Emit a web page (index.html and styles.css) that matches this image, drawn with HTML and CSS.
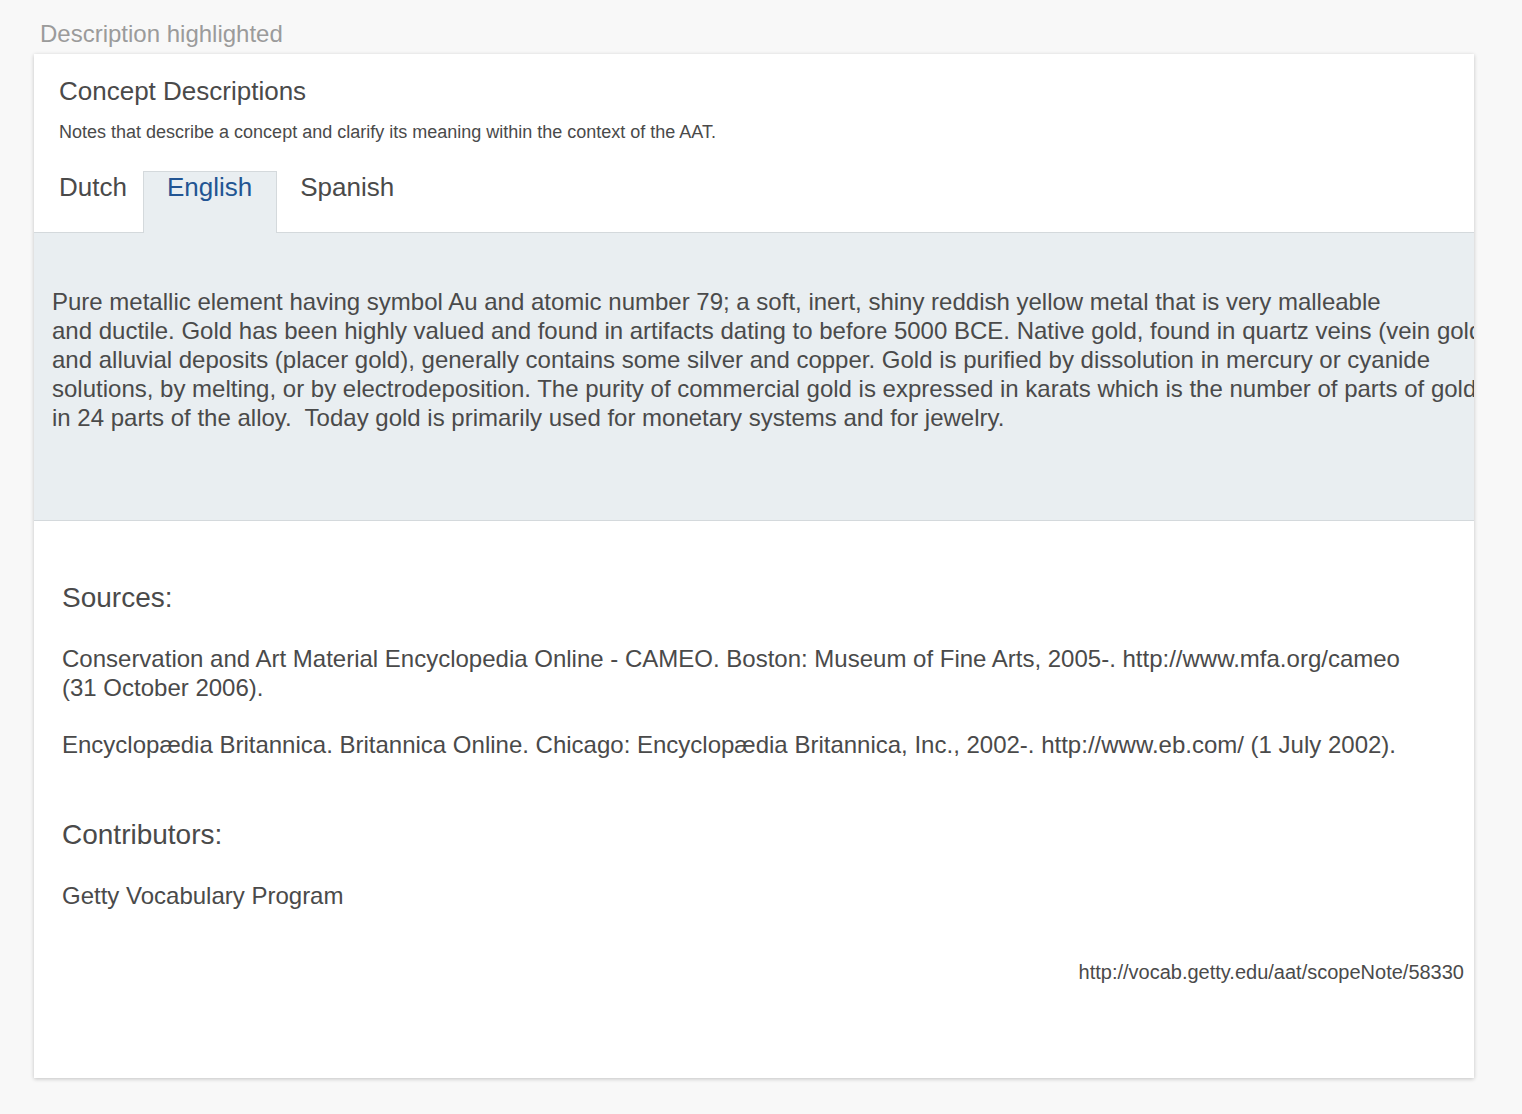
FILE: index.html
```html
<!DOCTYPE html>
<html lang="en">
<head>
<meta charset="utf-8">
<title>Description highlighted</title>
<link rel="stylesheet" href="styles.css">
</head>
<body>
<div class="page">
  <div class="label">Description highlighted</div>
  <section class="card">
    <header class="card-head">
      <h1 class="title">Concept Descriptions</h1>
      <p class="subtitle">Notes that describe a concept and clarify its meaning within the context of the AAT.</p>
    </header>
    <nav class="tabs">
      <span class="tab tab-dutch">Dutch</span>
      <span class="tab tab-english active">English</span>
      <span class="tab tab-spanish">Spanish</span>
    </nav>
    <div class="panel">
      <p class="note"><span class="line">Pure metallic element having symbol Au and atomic number 79; a soft, inert, shiny reddish yellow metal that is very malleable</span>
<span class="line">and ductile. Gold has been highly valued and found in artifacts dating to before 5000 BCE. Native gold, found in quartz veins (vein gold)</span>
<span class="line">and alluvial deposits (placer gold), generally contains some silver and copper. Gold is purified by dissolution in mercury or cyanide</span>
<span class="line">solutions, by melting, or by electrodeposition. The purity of commercial gold is expressed in karats which is the number of parts of gold</span>
<span class="line">in 24 parts of the alloy.&nbsp; Today gold is primarily used for monetary systems and for jewelry.</span></p>
    </div>
    <div class="meta">
      <h2 class="meta-title">Sources:</h2>
      <p class="meta-text">Conservation and Art Material Encyclopedia Online - CAMEO. Boston: Museum of Fine Arts, 2005-. http://www.mfa.org/cameo<br>(31 October 2006).</p>
      <p class="meta-text">Encyclopædia Britannica. Britannica Online. Chicago: Encyclopædia Britannica, Inc., 2002-. http://www.eb.com/ (1 July 2002).</p>
      <h2 class="meta-title contrib">Contributors:</h2>
      <p class="meta-text">Getty Vocabulary Program</p>
      <div class="uri">http://vocab.getty.edu/aat/scopeNote/58330</div>
    </div>
  </section>
</div>
</body>
</html>
```

FILE: styles.css
```css
html, body {
  margin: 0;
  padding: 0;
  background: #f8f8f8;
}
body {
  font-family: "Liberation Sans", Arial, Helvetica, sans-serif;
  color: #4a4a4a;
}
.page {
  padding: 20px 48px 36px 34px;
}
.label {
  font-size: 24px;
  line-height: 28px;
  color: #9b9b9b;
  padding-left: 6px;
  margin-bottom: 6px;
}
.card {
  background: #fff;
  width: 1440px;
  height: 1024px;
  box-shadow: 0 1px 4px rgba(0,0,0,0.22);
  overflow: hidden;
  box-sizing: border-box;
}
.card-head {
  padding: 22px 25px 0 25px;
}
.title {
  margin: 0;
  font-size: 26px;
  line-height: 30px;
  font-weight: normal;
  color: #4a4a4a;
}
.subtitle {
  margin: 15px 0 0 0;
  font-size: 18px;
  line-height: 22px;
  color: #4a4a4a;
}
.tabs {
  display: flex;
  margin-top: 28px;
  padding-left: 0;
  border-bottom: 1px solid #d4d9dc;
  height: 61px;
}
.tab {
  font-size: 26px;
  line-height: 30px;
  padding: 0 24px;
  color: #4a4a4a;
  border: 1px solid transparent;
  border-bottom: none;
}
.tab-dutch {
  padding-right: 15px;
}
.tab-english {
  padding-left: 23px;
  padding-right: 24px;
}
.tab-spanish {
  padding-left: 22px;
}
.tab.active {
  background: #e9eef1;
  border-color: #d4d9dc;
  color: #225593;
  margin-bottom: -1px;
}
.panel {
  background: #e9eef1;
  border-bottom: 1px solid #d4d9dc;
  height: 288px;
  box-sizing: border-box;
  padding: 54px 0 0 18px;
}
.note {
  margin: 0;
  font-size: 24px;
  line-height: 29px;
  white-space: nowrap;
  color: #4a4a4a;
}
.line {
  display: block;
}
.meta {
  padding: 60px 10px 0 28px;
}
.meta-title {
  margin: 0;
  font-size: 28px;
  line-height: 34px;
  font-weight: normal;
  color: #4a4a4a;
}
.meta-title.contrib {
  margin-top: 59px;
}
.meta-text {
  margin: 28.5px 0 0 0;
  font-size: 24px;
  line-height: 29px;
  color: #4a4a4a;
}
.uri {
  text-align: right;
  font-size: 20px;
  line-height: 24px;
  margin-top: 50.5px;
  color: #4a4a4a;
}
```
